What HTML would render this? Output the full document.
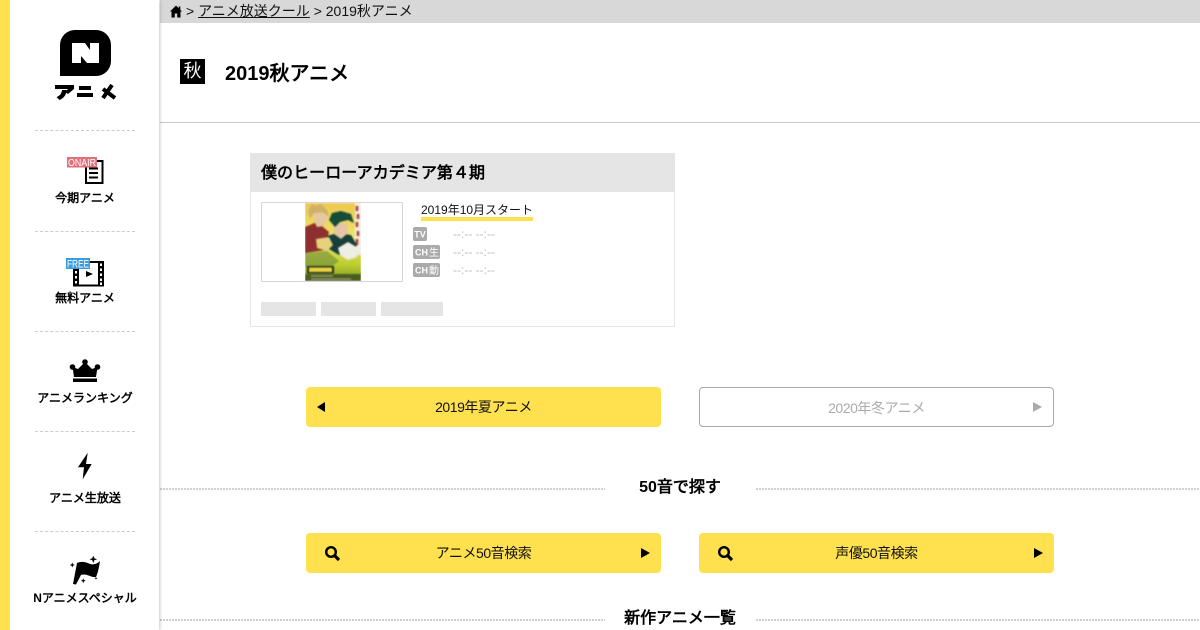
<!DOCTYPE html>
<html lang="ja"><head><meta charset="utf-8"><title>2019秋アニメ</title>
<style>
*{margin:0;padding:0;box-sizing:border-box}
html,body{width:1200px;height:630px;overflow:hidden;background:#fff;font-family:"Liberation Sans","WenQuanYi Zen Hei",sans-serif;color:#000}
.a{position:absolute}
.t{position:absolute;white-space:nowrap;line-height:1}
#side{left:0;top:0;width:159px;height:630px;background:#fff;border-left:10px solid #ffe14f;box-shadow:0 0 4px rgba(0,0,0,.35);z-index:1}
.sep{position:absolute;left:35px;width:100px;border-top:1px dashed #ccc;z-index:2}
.nav{position:absolute;left:10px;width:150px;text-align:center;font-size:12px;font-weight:bold;line-height:1;white-space:nowrap;z-index:2}
.ic{z-index:2}
.btn{position:absolute;width:355px;height:40px;background:#ffe14f;border-radius:4px;text-align:center;font-size:14px;line-height:40px;color:#111;letter-spacing:-.45px}
.dash{position:absolute;height:2px;background:repeating-linear-gradient(90deg,#d0d0d0 0,#d0d0d0 2px,transparent 2px,transparent 3px)}
.h2{position:absolute;left:160px;width:1040px;text-align:center;font-size:16px;font-weight:bold;line-height:1;white-space:nowrap}
.time{position:absolute;left:453px;font-size:12px;color:#bbb;line-height:1;white-space:nowrap}
.g{position:absolute;top:302px;height:14px;background:#e5e5e5}
</style></head><body>
<div class="a" id="side"></div>

<!-- logo -->
<svg class="a ic" style="left:54px;top:28px" width="64" height="74" viewBox="0 0 64 74">
<path d="M6 17a15 15 0 0 1 15-15h21a15 15 0 0 1 15 15v16a15 15 0 0 1-15 15H6z" fill="#000"/>
<path d="M18 15h13l5 7v-7h9v20H33l-6-7v7h-9z" fill="#fff"/>
<path d="M1 57h19v4l-6 5-3-2 3-3H1z" fill="#000"/>
<path d="M8 62h4.500c0 4-2 8-7 10l-3-3c3-1 5-3 5.500-7z" fill="#000"/>
<path d="M25 58h12v4H25zM23 65h16v4H23z" fill="#000"/>
<path d="M58 57L49 70M49 61l12 9" fill="none" stroke="#000" stroke-width="4"/>
</svg>

<div class="sep" style="top:130px"></div>
<div class="sep" style="top:231px"></div>
<div class="sep" style="top:331px"></div>
<div class="sep" style="top:431px"></div>
<div class="sep" style="top:531px"></div>

<!-- on air -->
<svg class="a ic" style="left:66px;top:156px" width="40" height="30" viewBox="0 0 40 30">
<rect x="20" y="5" width="16.500" height="22" fill="#fff" stroke="#000" stroke-width="2"/>
<path d="M23 12.500h9M23 17h9M23 21.500h9" stroke="#000" stroke-width="2"/>
<rect x="1" y="1" width="30" height="10.500" fill="#e0707a"/>
<text x="16" y="9.800" font-family="Liberation Sans" font-size="10.500" fill="#fff" text-anchor="middle" textLength="28" lengthAdjust="spacingAndGlyphs">ONAIR</text>
</svg>
<div class="nav" style="top:192px">今期アニメ</div>

<!-- free -->
<svg class="a ic" style="left:65px;top:257px" width="42" height="32" viewBox="0 0 42 32">
<rect x="9" y="5" width="29" height="23.500" fill="#fff" stroke="#000" stroke-width="2"/>
<rect x="8" y="4" width="6" height="25.500" fill="#000"/><rect x="33" y="4" width="6" height="25.500" fill="#000"/>
<path d="M10 14h2v2.500h-2zM10 19h2v2.500h-2zM10 24h2v2.500h-2zM35 6.500h2V9h-2zM35 11.500h2V14h-2zM35 16.500h2V19h-2zM35 21.500h2V24h-2zM35 25.500h2V28h-2z" fill="#fff"/>
<path d="M21 14v6l7-3z" fill="#000"/>
<rect x="1" y="1" width="24" height="11" fill="#3a9ede"/>
<text x="13" y="10.300" font-family="Liberation Sans" font-size="11" fill="#fff" text-anchor="middle" textLength="22" lengthAdjust="spacingAndGlyphs">FREE</text>
</svg>
<div class="nav" style="top:292px">無料アニメ</div>

<!-- crown -->
<svg class="a ic" style="left:68px;top:358px" width="34" height="26" viewBox="0 0 34 26">
<circle cx="17" cy="4" r="2.800"/><circle cx="4.500" cy="9" r="2.800"/><circle cx="29.500" cy="9" r="2.800"/>
<path d="M4.500 9l5.500 2L17 4l7 7 5.500-2L28 19H6z"/><rect x="5" y="20.500" width="24" height="3.500"/>
</svg>
<div class="nav" style="top:392px">アニメランキング</div>

<!-- bolt -->
<svg class="a ic" style="left:76px;top:452px" width="18" height="28" viewBox="0 0 18 28"><path d="M11.700.7L2 15.300h6L6.700 27.300 15.700 12H10z"/></svg>
<div class="nav" style="top:492px">アニメ生放送</div>

<!-- flag -->
<svg class="a ic" style="left:68px;top:556px" width="36" height="30" viewBox="0 0 36 30">
<path d="M9 7c5-2 9-1 13 1 4 1 7 0 10-3-1 6-2 12-4 16-5 1-9-4-15-2L8 28.500 5 28z"/>
<path d="M25.300-.5l1 2.800 2.800 1-2.800 1-1 2.800-1-2.800-2.800-1 2.800-1zM4.300 6.500l.7 1.800 1.800.7-1.800.7-.7 1.800-.7-1.800-1.800-.7 1.800-.7zM15.300 22.200l.7 1.800 1.800.7-1.800.7-.7 1.800-.7-1.800-1.800-.7 1.800-.7zM28 20.800l.4 1.100 1.100.4-1.100.4-.4 1.100-.4-1.100-1.100-.4 1.100-.4z"/>
</svg>
<div class="nav" style="top:592px">Nアニメスペシャル</div>

<!-- breadcrumb -->
<div class="a" style="left:160px;top:0;width:1040px;height:23px;background:#d8d8d8"></div>
<svg class="a" style="left:170px;top:5px" width="12" height="13" viewBox="0 0 12 13"><path d="M6 .5L0 6.500h1.500V12.500h3.300V8.500h2.400v4h3.300V6.500H12L10.300 4.800V1.500H8.700V3.200z"/></svg>
<div class="t" style="left:186px;top:4px;font-size:14px;color:#111">&gt; <span style="text-decoration:underline">アニメ放送クール</span> &gt; 2019秋アニメ</div>

<!-- title -->
<div class="a" style="left:180px;top:59px;width:25px;height:25px;background:#000;color:#fff;font-size:18px;line-height:25px;text-align:center">秋</div>
<div class="t" style="left:225px;top:64px;font-size:20px;font-weight:bold">2019秋アニメ</div>
<div class="a" style="left:160px;top:122px;width:1040px;height:1px;background:#ccc"></div>

<!-- card -->
<div class="a" style="left:250px;top:153px;width:425px;height:174px;border:1px solid #e5e5e5"></div>
<div class="a" style="left:250px;top:153px;width:425px;height:39px;background:#e5e5e5"></div>
<div class="t" style="left:261px;top:166px;font-size:16px;font-weight:bold;letter-spacing:.05px">僕のヒーローアカデミア第４期</div>
<div class="a" style="left:261px;top:202px;width:142px;height:80px;border:1px solid #d5d5d5"></div>
<div class="a" style="left:305px;top:203px;width:56px;height:78px;overflow:hidden">
<svg width="56" height="78" viewBox="0 0 56 78" style="display:block;filter:blur(.7px)">
<defs><linearGradient id="bg" x1="0" y1="0" x2="0" y2="1"><stop offset="0" stop-color="#eec84c"/><stop offset=".5" stop-color="#eee870"/><stop offset=".8" stop-color="#b9cc2c"/><stop offset="1" stop-color="#7e9a28"/></linearGradient></defs>
<rect width="56" height="78" fill="url(#bg)"/>
<rect x="50" y="0" width="6" height="52" fill="#f1eee0"/>
<path d="M52 3v5M53 11v5M52 19v5M53 28v5M52 36v6" stroke="#a83838" stroke-width="2.500"/>
<path d="M0 24l12-5 12 10-4 18-20 3z" fill="#8c2f2e"/>
<path d="M9 7l9-2 5 8-4 10-7 1-3-6z" fill="#e6c8a0"/>
<path d="M3 8l4-7 4 2 5-2 6 6 2 7-7-5-8 1-4 6z" fill="#cfb168"/>
<path d="M22 33l10-3 14 2 6 10-4 6-14 4-10-6z" fill="#173f3a"/>
<path d="M28 20h14l1 10-7 6-7-5z" fill="#e6c6a2"/>
<path d="M24 17l3-7 9-2 10 3 3 9-6-3-8 2-5 5z" fill="#164c38"/>
<path d="M11 36l13-2 4 8-6 6-10-3z" fill="#e5d27a"/>
<path d="M33 45l10-6 10 6-1 9-9 3-8-5z" fill="#efeee6"/>
<path d="M0 50l22-2 12 10-8 6H0z" fill="#6d8a3a" opacity=".6"/>
<rect x="2" y="63" width="27" height="7.500" fill="#22301e"/><rect x="4" y="64.500" width="23" height="4.500" fill="#e8d23e"/>
<rect x="0" y="71" width="56" height="7" fill="#4a5c1e"/>
<path d="M6 73h22M6 76h40" stroke="#d8d8c8" stroke-width="1" opacity=".7"/>
</svg></div>
<div class="t" style="left:421px;top:204px;font-size:12px;color:#111">2019年10月スタート</div>
<div class="a" style="left:421px;top:217px;width:112px;height:4px;background:#ffe14f"></div>

<!-- tags -->
<svg class="a" style="left:413px;top:227px" width="27" height="50" viewBox="0 0 27 50" font-family="Liberation Sans, WenQuanYi Zen Hei, sans-serif" font-weight="bold" fill="#fff">
<rect width="14" height="14" rx="2" fill="#aaa"/><rect y="18" width="27" height="14" rx="2" fill="#aaa"/><rect y="36" width="27" height="14" rx="2" fill="#aaa"/>
<text x="7" y="10.500" font-size="9" text-anchor="middle">TV</text>
<text x="2" y="28.500" font-size="9">CH</text><text x="16" y="28.800" font-size="10" font-weight="normal">生</text>
<text x="2" y="46.500" font-size="9">CH</text><text x="16" y="46.800" font-size="10" font-weight="normal">動</text>
</svg>
<div class="time" style="top:228px">--:-- --:--</div>
<div class="time" style="top:246px">--:-- --:--</div>
<div class="time" style="top:264px">--:-- --:--</div>
<div class="g" style="left:261px;width:55px"></div>
<div class="g" style="left:321px;width:55px"></div>
<div class="g" style="left:381px;width:62px"></div>

<!-- season nav -->
<div class="btn" style="left:306px;top:387px">2019年夏アニメ</div>
<svg class="a" style="left:317px;top:402px" width="9" height="10"><path d="M8 0v10L0 5z"/></svg>
<div class="btn" style="left:699px;top:387px;background:#fff;border:1px solid #aaa;color:#aaa;line-height:40px">2020年冬アニメ</div>
<svg class="a" style="left:1033px;top:402px" width="9" height="10"><path d="M0 0v10l9-5z" fill="#aaa"/></svg>

<!-- 50 -->
<div class="dash" style="left:160px;top:488px;width:445px"></div>
<div class="dash" style="left:756px;top:488px;width:444px"></div>
<div class="h2" style="top:480px">50音で探す</div>

<div class="btn" style="left:306px;top:533px">アニメ50音検索</div>
<div class="btn" style="left:699px;top:533px">声優50音検索</div>
<svg class="a" style="left:324px;top:545px" width="17" height="17" viewBox="0 0 17 17"><circle cx="7" cy="7" r="4.800" fill="none" stroke="#000" stroke-width="2.400"/><path d="M10.500 10.500l4.500 4.500" stroke="#000" stroke-width="3.200"/></svg>
<svg class="a" style="left:717px;top:545px" width="17" height="17" viewBox="0 0 17 17"><circle cx="7" cy="7" r="4.800" fill="none" stroke="#000" stroke-width="2.400"/><path d="M10.500 10.500l4.500 4.500" stroke="#000" stroke-width="3.200"/></svg>
<svg class="a" style="left:641px;top:548px" width="9" height="10"><path d="M0 0v10l9-5z"/></svg>
<svg class="a" style="left:1034px;top:548px" width="9" height="10"><path d="M0 0v10l9-5z"/></svg>

<div class="dash" style="left:160px;top:619px;width:445px"></div>
<div class="dash" style="left:756px;top:619px;width:444px"></div>
<div class="h2" style="top:611px">新作アニメ一覧</div>
</body></html>
